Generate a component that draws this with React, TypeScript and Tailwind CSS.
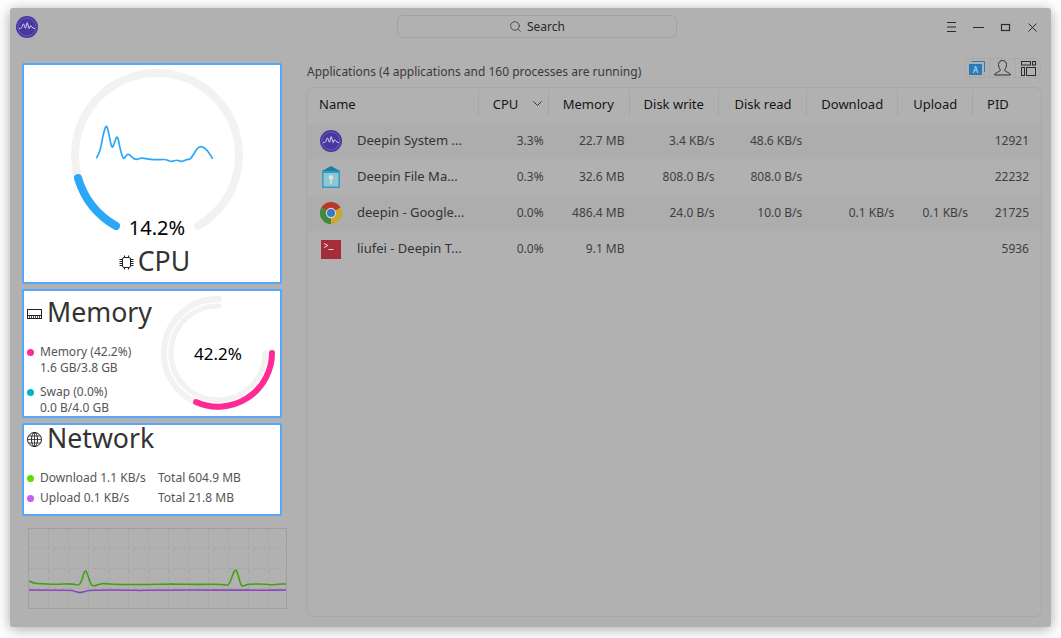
import { Search } from "lucide-react";

const smooth = (pts: number[][]) => {
  let d = `M${pts[0][0]} ${pts[0][1]}`;
  for (let i = 1; i < pts.length - 1; i++) {
    const mx = (pts[i][0] + pts[i + 1][0]) / 2;
    const my = (pts[i][1] + pts[i + 1][1]) / 2;
    d += ` Q${pts[i][0]} ${pts[i][1]} ${mx} ${my}`;
  }
  const last = pts[pts.length - 1];
  return d + ` L${last[0]} ${last[1]}`;
};

const cpuLine = [
  [110, 278], [120, 262], [130, 205], [140, 176], [148, 215], [156, 252], [163, 235], [172, 208],
  [180, 250], [189, 283], [196, 276], [204, 265], [215, 276], [228, 285], [245, 278], [270, 284],
  [300, 284], [318, 283], [335, 291], [350, 284], [365, 291], [380, 283], [392, 283], [405, 260],
  [418, 243], [435, 248], [448, 265], [457, 280],
].map(([x, y]) => [60 + x / 3, 65 + y / 3]);

const greenLine = [
  [29, 581], [34, 583.5], [40, 583.5], [55, 584.5], [72, 583.5], [78, 585.5], [81, 583], [85, 569], [88, 575],
  [91, 585.5], [95, 586], [99, 584], [105, 583.5], [115, 584.5], [150, 584.5], [170, 584], [200, 584.5],
  [222, 584], [228, 586], [231, 580], [235, 568], [238, 574], [241, 586], [244, 586], [248, 584],
  [265, 584], [272, 585], [278, 584], [286, 584],
];

const purpleLine = [
  [29, 590], [70, 590], [74, 591], [80, 593], [86, 591], [92, 590], [130, 590], [140, 590.6], [150, 590],
  [230, 590], [265, 590.3], [286, 590],
];

type Row = {
  icon: React.ReactNode;
  name: string;
  cpu: string;
  mem: string;
  dw?: string;
  dr?: string;
  dl?: string;
  ul?: string;
  pid: string;
  shaded: boolean;
};

function MonitorLogo({ size = 22 }: { size?: number }) {
  return (
    <svg width={size} height={size} viewBox="0 0 22 22">
      <circle cx="11" cy="11" r="11" fill="#46389f" />
      <circle cx="11" cy="11" r="9" fill="none" stroke="#7d72c9" strokeWidth="0.6" />
      <path d="M3.5 12.5 C5.5 12.5 6 11.5 6.8 9 C7.3 7.4 7.8 7.6 8.3 9.5 C8.8 11.5 9 12.5 9.6 12 C10.4 11 10.4 7 11.2 6.6 C12 7 12.2 11.5 13 12.5 C13.8 12.9 14 9.4 14.8 9.6 C15.6 10 16 12.5 18.5 12.5" fill="none" stroke="#d9d4f2" strokeWidth="1" strokeLinecap="round" />
    </svg>
  );
}

function FolderIcon() {
  return (
    <svg width="18" height="22" viewBox="0 0 18 22">
      <path d="M0 5 L9 0 L18 5 V8 H0 Z" fill="#1f7fa3" />
      <rect x="0" y="5" width="18" height="17" fill="#2f9dc0" />
      <rect x="1.5" y="7" width="15" height="13.5" fill="#8fc6cf" />
      <circle cx="9" cy="11.5" r="2.2" fill="#d7e6e6" />
      <rect x="8.4" y="13" width="1.2" height="5" fill="#d7e6e6" />
    </svg>
  );
}

function ChromeIcon() {
  return (
    <svg width="22" height="22" viewBox="0 0 22 22">
      <circle cx="11" cy="11" r="11" fill="#c9a82e" />
      <path d="M11 11 L1.47 5.5 A11 11 0 0 1 20.53 5.5 Z" fill="#b8392c" />
      <path d="M11 11 L11 22 A11 11 0 0 1 1.47 5.5 Z" fill="#3f8a3f" />
      <circle cx="11" cy="11" r="5.2" fill="#d8d8d8" />
      <circle cx="11" cy="11" r="4" fill="#3a78c2" />
    </svg>
  );
}

function TerminalIcon() {
  return (
    <svg width="20" height="19" viewBox="0 0 20 19">
      <rect width="20" height="19" fill="#a52d3b" />
      <path d="M3 3.5 L7 5.5 L3 7.5" fill="none" stroke="#e8d5d7" strokeWidth="1" />
      <path d="M7.5 9.5 H12.5" stroke="#e8d5d7" strokeWidth="1" />
    </svg>
  );
}

const rows: Row[] = [
  { icon: <MonitorLogo />, name: "Deepin System ...", cpu: "3.3%", mem: "22.7 MB", dw: "3.4 KB/s", dr: "48.6 KB/s", pid: "12921", shaded: true },
  { icon: <FolderIcon />, name: "Deepin File Ma...", cpu: "0.3%", mem: "32.6 MB", dw: "808.0 B/s", dr: "808.0 B/s", pid: "22232", shaded: false },
  { icon: <ChromeIcon />, name: "deepin - Google...", cpu: "0.0%", mem: "486.4 MB", dw: "24.0 B/s", dr: "10.0 B/s", dl: "0.1 KB/s", ul: "0.1 KB/s", pid: "21725", shaded: true },
  { icon: <TerminalIcon />, name: "liufei - Deepin T...", cpu: "0.0%", mem: "9.1 MB", pid: "5936", shaded: false },
];

const headers = [
  { label: "CPU", cls: "w-[70px] pl-[15px]" },
  { label: "Memory", cls: "w-[81px] pl-[15px]" },
  { label: "Disk write", cls: "w-[90px] pl-[15px]" },
  { label: "Disk read", cls: "w-[88px] pl-[16px]" },
  { label: "Download", cls: "w-[91px] pl-[15px]" },
  { label: "Upload", cls: "w-[75px] pl-[16px]" },
  { label: "PID", cls: "w-[69px] pl-[15px]" },
];

function Dot({ className }: { className: string }) {
  return <span className={`w-[7px] h-[7px] rounded-full shrink-0 mr-[6px] ${className}`} />;
}

function CpuCard() {
  return (
    <div className="relative h-[221px] bg-white border-2 border-[#55a8fb] rounded-[2px] flex flex-col items-center justify-end pb-[3px] pl-[5px]">
      <svg className="absolute -left-[2px] -top-[2px]" width="260" height="221" viewBox="22 63 260 221">
        <path d="M116 226 A82 82 0 1 1 198 226" fill="none" stroke="#f2f2f2" strokeWidth="8" strokeLinecap="round" />
        <path d="M78 178 A82 82 0 0 0 116 226" fill="none" stroke="#2ca7f8" strokeWidth="8" strokeLinecap="round" />
        <path d={smooth(cpuLine)} fill="none" stroke="#2ca7f8" strokeWidth="1.7" strokeLinecap="round" />
      </svg>
      <div className="absolute left-[83px] top-[150px] w-[100px] text-center text-[20px] leading-[26px] text-black">14.2%</div>
      <div className="relative flex items-center text-[#333333] text-[26.67px] leading-[36px]">
        <svg className="mr-[4px] mt-[2px]" width="15" height="15" viewBox="0 0 15 15" fill="none" stroke="#222" strokeWidth="1">
          <rect x="3.5" y="2.5" width="8" height="10" rx="1.5" />
          <path d="M0.5 4.5 H3 M0.5 6.5 H3 M0.5 8.5 H3 M0.5 10.5 H3 M12 4.5 H14.5 M12 6.5 H14.5 M12 8.5 H14.5 M12 10.5 H14.5 M5.5 0.5 V2.5 M9.5 0.5 V2.5 M5.5 12.5 V14.5 M9.5 12.5 V14.5" />
        </svg>
        CPU
      </div>
    </div>
  );
}

function MemoryCard() {
  return (
    <div className="relative h-[129px] bg-white border-2 border-[#55a8fb] rounded-[2px] pt-[8px] pl-[3px]">
      <svg className="absolute -left-[2px] -top-[2px]" width="260" height="129" viewBox="22 289 260 129">
        <path d="M219 299 A54 54 0 1 0 272 353" fill="none" stroke="#f2f2f2" strokeWidth="6" strokeLinecap="round" />
        <path d="M219 306 A47 47 0 1 0 265 353" fill="none" stroke="#f2f2f2" strokeWidth="5" strokeLinecap="round" />
        <path d="M272 353 A54 54 0 0 1 196 402" fill="none" stroke="#ff2a96" strokeWidth="6" strokeLinecap="round" />
      </svg>
      <div className="absolute left-[144px] top-[51px] w-[100px] text-center text-[17px] leading-[24px] text-black">42.2%</div>
      <div className="relative flex items-center text-[#333333] text-[26.67px] leading-[26px]">
        <svg className="mr-[5px] mt-[4px]" width="15" height="12" viewBox="0 0 15 12" fill="none" stroke="#222" strokeWidth="1">
          <rect x="0.5" y="1.5" width="14" height="9" />
          <path d="M0.5 7.5 H14.5" />
          <path d="M2.5 8 V10.5 M4.5 8 V10.5 M6.5 8 V10.5 M8.5 8 V10.5 M10.5 8 V10.5 M12.5 8 V10.5" strokeWidth="0.8" />
        </svg>
        Memory
      </div>
      <div className="relative mt-[19px] text-[12px] leading-[16px] text-[#555555]">
        <div className="flex items-center"><Dot className="bg-[#ff2a96]" />Memory (42.2%)</div>
        <div className="pl-[13px]">1.6 GB/3.8 GB</div>
        <div className="flex items-center mt-[8px]"><Dot className="bg-[#00b4c9]" />Swap (0.0%)</div>
        <div className="pl-[13px]">0.0 B/4.0 GB</div>
      </div>
    </div>
  );
}

function NetworkCard() {
  return (
    <div className="h-[93px] bg-white border-2 border-[#55a8fb] rounded-[2px] pl-[3px]">
      <div className="flex items-center text-[#333333] text-[26.67px] leading-[26px]">
        <svg className="mr-[5px] mt-[2px]" width="15" height="15" viewBox="0 0 15 15" fill="none" stroke="#222" strokeWidth="1">
          <circle cx="7.5" cy="7.5" r="7" />
          <ellipse cx="7.5" cy="7.5" rx="3" ry="7" />
          <path d="M7.5 0.5 V14.5 M0.5 7.5 H14.5 M1.5 4 H13.5 M1.5 11 H13.5" strokeWidth="0.8" />
        </svg>
        Network
      </div>
      <div className="mt-[17px] text-[12px] leading-[20px] text-[#555555]">
        <div className="flex items-center">
          <div className="w-[131px] flex items-center"><Dot className="bg-[#5fdc00]" />Download 1.1 KB/s</div>
          <div>Total 604.9 MB</div>
        </div>
        <div className="flex items-center">
          <div className="w-[131px] flex items-center"><Dot className="bg-[#c45cf5]" />Upload 0.1 KB/s</div>
          <div>Total 21.8 MB</div>
        </div>
      </div>
    </div>
  );
}

function NetChart() {
  const xs = [48, 68, 88, 108, 128, 148, 168, 188, 208, 228, 248, 268];
  const ys = [548, 568, 588];
  return (
    <svg className="block mt-[7px] ml-[6px]" width="259" height="81" viewBox="28 528 259 81">
      <rect x="28.5" y="528.5" width="258" height="80" fill="none" stroke="#a0a0a0" />
      {xs.map((x) => (
        <path key={x} d={`M${x + 0.5} 529 V608`} stroke="#a6a6a6" strokeDasharray="4 4" />
      ))}
      {ys.map((y) => (
        <path key={y} d={`M29 ${y + 0.5} H286`} stroke="#a6a6a6" strokeDasharray="4 4" />
      ))}
      <path d={smooth(greenLine)} fill="none" stroke="#469f0c" strokeWidth="1.6" />
      <path d={smooth(purpleLine)} fill="none" stroke="#8a45b8" strokeWidth="1.6" />
    </svg>
  );
}

function TitleBar() {
  return (
    <div className="h-[38px] shrink-0 flex items-center">
      <div className="ml-[6px]"><MonitorLogo /></div>
      <div className="ml-[359px] w-[280px] h-[23px] -mt-[1px] flex items-center justify-center border border-[#a2a2a2] rounded-[6px] text-[12px] text-[#2a2a2a]">
        <Search size={13} strokeWidth={1.4} className="mr-[5px] text-[#333]" />
        Search
      </div>
      <svg className="ml-[270px]" width="90" height="14" viewBox="947 20 90 14" fill="none" stroke="#2b2b2b">
        <path d="M947 22.5 H956 M947 27 H956 M947 31.5 H956" />
        <path d="M973 27.5 H984" />
        <rect x="1001.5" y="24.5" width="8" height="6" strokeWidth="1.2" />
        <path d="M1028.5 23.5 L1036.5 31.5 M1036.5 23.5 L1028.5 31.5" />
      </svg>
    </div>
  );
}

function ViewSwitch() {
  return (
    <div className="flex h-[20px] w-[77px] border border-[#a9a9a9] rounded-[7px]">
      <div className="w-[25px] border-r border-[#a9a9a9] flex items-center justify-center">
        <svg width="16" height="15" viewBox="0 0 16 15">
          <path d="M2.5 .5 H15.5 V11" fill="none" stroke="#2b7bb8" />
          <rect x="0" y="3" width="13" height="11" fill="#2b7bb8" />
          <text x="6.5" y="12" textAnchor="middle" fontSize="8" fontFamily="'Noto Sans', sans-serif" fill="#d5e6f2">A</text>
        </svg>
      </div>
      <div className="w-[26px] border-r border-[#a9a9a9] flex items-center justify-center">
        <svg width="17" height="16" viewBox="0 0 17 16" fill="none" stroke="#2b2b2b">
          <path d="M0.5 15 H16.5 C16.5 12.5 11 12 10.5 10 C12 8 12.5 6.5 12.5 4.5 C12.5 2 10.5 .5 8.5 .5 C6.5 .5 4.5 2 4.5 4.5 C4.5 6.5 5 8 6.5 10 C6 12 .5 12.5 .5 15 Z" />
        </svg>
      </div>
      <div className="flex-1 flex items-center justify-center">
        <svg width="15" height="15" viewBox="0 0 15 15" fill="none" stroke="#2b2b2b">
          <rect x="0.5" y="0.5" width="9" height="3.5" />
          <rect x="11.5" y="0.5" width="3" height="3.5" />
          <rect x="0.5" y="6.5" width="3" height="8" />
          <rect x="5.5" y="6.5" width="9" height="8" />
        </svg>
      </div>
    </div>
  );
}

function ProcessTable() {
  const cell = "text-right text-[12px] text-[#3f3f3f]";
  return (
    <div className="flex-1 border border-[#a8a8a8] rounded-[8px] overflow-hidden">
      <div className="flex h-[35px] pb-[1px] text-[13px] text-[#161616]">
        <div className="w-[171px] flex items-center pl-[12px]">Name</div>
        {headers.map((h, i) => (
          <div key={h.label} className={`relative flex items-center ${h.cls}`}>
            <span className="absolute left-0 top-[2px] bottom-[6px] w-px bg-[#a6a6a6]" />
            {h.label}
            {i === 0 && (
              <svg className="absolute right-[6px] top-[13px]" width="9" height="6" viewBox="0 0 9 6" fill="none" stroke="#333">
                <path d="M.5 .5 L4.5 4.5 L8.5 .5" />
              </svg>
            )}
          </div>
        ))}
      </div>
      {rows.map((r) => (
        <div key={r.pid} className={`flex items-center h-[36px] ${r.shaded ? "bg-[#adadad]" : ""}`}>
          <div className="w-[171px] flex items-center text-[13px] text-[#333333]">
            <div className="w-[50px] shrink-0 pl-[13px] flex items-center">
              <div className="w-[22px] flex justify-center">{r.icon}</div>
            </div>
            {r.name}
          </div>
          <div className={`w-[70px] pr-[4px] ${cell}`}>{r.cpu}</div>
          <div className={`w-[81px] pr-[4px] ${cell}`}>{r.mem}</div>
          <div className={`w-[90px] pr-[4px] ${cell}`}>{r.dw}</div>
          <div className={`w-[88px] pr-[4px] ${cell}`}>{r.dr}</div>
          <div className={`w-[91px] pr-[3px] ${cell}`}>{r.dl}</div>
          <div className={`w-[75px] pr-[4px] ${cell}`}>{r.ul}</div>
          <div className={`w-[69px] pr-[12px] ${cell}`}>{r.pid}</div>
        </div>
      ))}
    </div>
  );
}

export default function App() {
  return (
    <div className="w-[1061px] h-[638px] bg-white overflow-hidden pl-[10px] pt-[8px] font-['Noto_Sans',sans-serif]">
      <div className="w-[1041px] h-[619px] bg-[#b1b1b1] rounded-[3px] shadow-[0_2px_14px_rgba(0,0,0,0.35)] flex flex-col">
        <TitleBar />
        <div className="flex-1 flex min-h-0">
          <div className="w-[260px] ml-[12px] mt-[17px] flex flex-col gap-[5px]">
            <CpuCard />
            <MemoryCard />
            <NetworkCard />
            <NetChart />
          </div>
          <div className="w-[736px] ml-[24px] mt-[12px] mb-[10px] flex flex-col">
            <div className="h-[29px] shrink-0 flex justify-between pr-[1px]">
              <div className="mt-[5px] ml-[1px] text-[12px] leading-[18px] text-[#3a3a3a]">
                Applications (4 applications and 160 processes are running)
              </div>
              <ViewSwitch />
            </div>
            <ProcessTable />
          </div>
        </div>
      </div>
    </div>
  );
}
